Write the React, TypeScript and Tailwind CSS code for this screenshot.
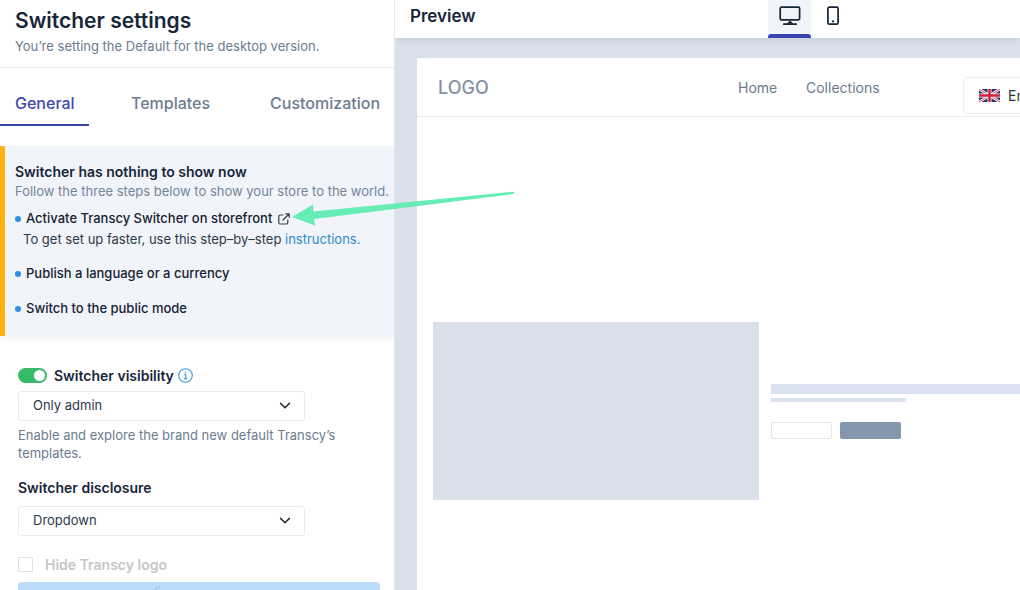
import React from "react";

function DesktopIcon() {
  return (
    <svg width="22" height="20" viewBox="0 0 22 20" fill="none" stroke="#152536" strokeWidth="1.7" aria-hidden="true">
      <rect x="1.2" y="1.2" width="19.4" height="12.6" rx="1.2" />
      <path d="M4.8 18.2h12.4" strokeLinecap="round" />
      <path d="M11 14.4l3.4 3.4H7.6z" fill="#152536" stroke="none" />
    </svg>
  );
}

function PhoneIcon() {
  return (
    <svg width="12" height="20" viewBox="0 0 12 20" fill="none" stroke="#152536" strokeWidth="1.7" aria-hidden="true">
      <rect x="0.9" y="1.2" width="10.2" height="17" rx="1.4" />
      <circle cx="6" cy="15.4" r="1.1" fill="#152536" stroke="none" />
    </svg>
  );
}

function ExternalIcon() {
  return (
    <svg width="12" height="12" viewBox="0 0 12 12" fill="none" stroke="#34404d" strokeWidth="1.2" strokeLinecap="round" strokeLinejoin="round" aria-hidden="true">
      <path d="M5 2H2.2A1.4 1.4 0 0 0 .8 3.4v6.2A1.4 1.4 0 0 0 2.2 11h6.2a1.4 1.4 0 0 0 1.4-1.4V7" />
      <path d="M7.6.8h3.6v3.6M11 1L5 7" />
    </svg>
  );
}

function InfoIcon() {
  return (
    <svg width="15" height="15" viewBox="0 0 15 15" fill="none" stroke="#3f97dc" strokeWidth="1.1" aria-hidden="true">
      <circle cx="7.5" cy="7.5" r="6.8" />
      <path d="M6.3 6.6h1.4v4M6 10.6h3.2" />
      <circle cx="7.4" cy="4.5" r="0.8" fill="#3f97dc" stroke="none" />
    </svg>
  );
}

function UkFlag() {
  return (
    <svg width="21" height="13" viewBox="0 0 21 13" aria-hidden="true">
      <rect width="21" height="13" fill="#29306b" />
      <path d="M0 0l21 13M21 0L0 13" stroke="#fff" strokeWidth="2.6" />
      <path d="M0 0l21 13M21 0L0 13" stroke="#cf1f3d" strokeWidth="0.8" />
      <path d="M10.5 0v13M0 6.5h21" stroke="#fff" strokeWidth="4" />
      <path d="M10.5 0v13M0 6.5h21" stroke="#cf1f3d" strokeWidth="2.4" />
    </svg>
  );
}

function PointerArrow() {
  return (
    <svg className="pointer-events-none absolute left-[290px] top-[188px] z-10" width="226" height="40" viewBox="0 0 226 40" aria-hidden="true">
      <path d="M2 29L23 16.5L23.5 23.5L223 3.8Q226 4.6 223 6L24 31L25 37.5Z" fill="#66ecb4" />
    </svg>
  );
}

function SelectBox({ id, label, options }: { id: string; label: string; options: string[] }) {
  return (
    <div className="relative w-[287px]">
      <select
        id={id}
        aria-label={label}
        className="block h-[30px] w-full appearance-none rounded-[3px] border border-[#e8eaed] bg-white pl-[14px] pr-8 text-[13px] text-[#2b3a4a]"
      >
        {options.map((o) => (
          <option key={o}>{o}</option>
        ))}
      </select>
      <svg className="pointer-events-none absolute right-[14px] top-[11px]" width="12" height="8" viewBox="0 0 12 8" fill="none" stroke="#27323d" strokeWidth="1.6" strokeLinecap="round" strokeLinejoin="round" aria-hidden="true">
        <path d="M1.6 1.4L6 5.8l4.4-4.4" />
      </svg>
    </div>
  );
}

function Step({ children }: { children: React.ReactNode }) {
  return (
    <div className="flex h-5 items-center text-[13px] font-medium text-[#152232]">
      <span className="mr-[5px] size-[6px] rounded-full bg-[#2f8fe0]" />
      {children}
    </div>
  );
}

function SettingsPanel() {
  return (
    <aside className="w-[395px] shrink-0 border-r border-[#e6eaf0] bg-white">
      <header className="h-[68px] border-b border-[#e6eaef] pl-[15px] pt-2">
        <h1 className="text-[21px] font-semibold leading-[26px] text-[#17263a]">Switcher settings</h1>
        <p className="pt-[3px] text-[13px] leading-[18px] text-[#6b7b8f]">You’re setting the Default for the desktop version.</p>
      </header>

      <nav className="flex h-[58px] text-[16px] font-medium text-[#6d7c90]">
        <button className="mt-[14px] w-[89px] border-b-2 border-[#3a45b0] pl-[15px] text-left text-[#3f48b0]">General</button>
        <button className="ml-[42px] mt-[14px] border-b-2 border-transparent">Templates</button>
        <button className="ml-auto mr-[14px] mt-[14px] border-b-2 border-transparent">Customization</button>
      </nav>

      <section className="mt-5 h-[190px] border-l-[5px] border-[#ffb310] bg-[#f1f4fa] pl-[10px] pt-4 shadow-[0_3px_6px_rgba(0,0,0,0.05)]">
        <h2 className="text-[14px] font-semibold leading-5 text-[#17263a]">Switcher has nothing to show now</h2>
        <p className="mb-[9px] whitespace-nowrap text-[13px] leading-[18px] text-[#75859a]">Follow the three steps below to show your store to the world.</p>
        <Step>
          <a href="#activate" className="flex items-center gap-[6px]">
            Activate Transcy Switcher on storefront
            <ExternalIcon />
          </a>
        </Step>
        <p className="mb-[15px] pl-2 text-[13px] leading-5 text-[#2c3948]">
          To get set up faster, use this step–by–step{" "}
          <a href="#instructions" className="text-[#2f8bd0]">instructions.</a>
        </p>
        <Step>Publish a language or a currency</Step>
        <div className="mt-[15px]">
          <Step>Switch to the public mode</Step>
        </div>
      </section>

      <form className="pl-[18px] pr-[14px] pt-7">
        <div className="mb-[5px] flex h-[22px] items-center">
          <input
            id="visibility"
            type="checkbox"
            role="switch"
            defaultChecked
            className="mr-[7px] flex h-[15px] w-[29px] appearance-none items-center justify-end rounded-full bg-[#36bb6a] px-[2px] before:size-[11px] before:rounded-full before:bg-white"
          />
          <label htmlFor="visibility" className="mr-1 text-[14px] font-semibold text-[#17263a]">Switcher visibility</label>
          <InfoIcon />
        </div>
        <SelectBox id="audience" label="Audience" options={["Only admin", "Public"]} />
        <p className="mb-4 mt-[5px] max-w-[330px] text-[13px] leading-[18px] text-[#6b7b8f]">
          Enable and explore the brand new default Transcy’s templates.
        </p>
        <label htmlFor="disclosure" className="mb-2 block text-[14px] font-semibold leading-5 text-[#17263a]">Switcher disclosure</label>
        <SelectBox id="disclosure" label="Switcher disclosure" options={["Dropdown", "Modal"]} />
        <div className="mb-2 mt-[18px] flex h-5 items-center gap-3">
          <input id="hide-logo" type="checkbox" disabled className="size-[15px] appearance-none border border-[#e0e2e4] bg-white" />
          <label htmlFor="hide-logo" className="text-[14px] font-semibold text-[#c4c6c9]">Hide Transcy logo</label>
        </div>
        <button type="button" aria-label="Upgrade" className="h-10 w-full rounded-[4px] bg-[#bbdcfa] pl-[135px]">
          <svg className="mb-6" width="8" height="10" viewBox="0 0 8 10" fill="none" stroke="#93c0e8" strokeWidth="1" aria-hidden="true">
            <path d="M7 1L5.8 3.4M4.4 1.8L1 8" />
          </svg>
        </button>
      </form>
    </aside>
  );
}

function Preview() {
  return (
    <main className="flex min-w-0 flex-1 flex-col overflow-hidden bg-[#dae1ea]">
      <header className="flex h-[38px] shrink-0 items-stretch bg-white pl-[15px] shadow-[0_2px_6px_rgba(40,55,80,0.12)]">
        <h2 className="w-[358px] shrink-0 pt-1 text-[17px] font-semibold leading-6 text-[#17263a]">Preview</h2>
        <button aria-label="Desktop" className="flex w-[43px] flex-col items-center justify-between bg-[#f1f4fa] pt-[6px]">
          <DesktopIcon />
          <span className="h-1 w-full rounded-t-[3px] bg-[#3a45b5]" />
        </button>
        <button aria-label="Mobile" className="flex w-[43px] justify-center pt-[6px]">
          <PhoneIcon />
        </button>
      </header>

      <div className="ml-[22px] mt-5 flex-1 overflow-hidden bg-white">
        <div className="flex h-[59px] items-center border-b border-[#e9ebee] pl-[21px] text-[14px] text-[#6c7a8c]">
          <span className="w-[300px] shrink-0 text-[18px] font-medium text-[#8591a3]">LOGO</span>
          <a href="#home" className="w-[68px] shrink-0">Home</a>
          <a href="#collections" className="w-[157px] shrink-0">Collections</a>
          <button className="mt-4 flex h-[37px] w-[140px] shrink-0 items-center gap-2 rounded-[4px] border border-[#eceef1] bg-white pl-[15px] text-[14px] text-[#27323f]">
            <UkFlag />
            English
          </button>
        </div>
        <div className="flex items-center gap-3 pl-4 pt-[205px]">
          <div className="h-[178px] w-[326px] shrink-0 bg-[#dae1ea]" />
          <div className="flex-1">
            <div className="h-[10px] bg-[#dbe3f2]" />
            <div className="mt-1 h-1 w-[135px] bg-[#dde3ee]" />
            <div className="mt-5 flex gap-2">
              <div className="h-[17px] w-[61px] shrink-0 rounded-[2px] border border-[#e4e6e9]" />
              <div className="h-[17px] w-[61px] shrink-0 rounded-[2px] bg-[#8597ae]" />
            </div>
          </div>
        </div>
      </div>
    </main>
  );
}

export default function App() {
  return (
    <div className="relative flex h-screen overflow-hidden bg-white font-['Inter',sans-serif]">
      <SettingsPanel />
      <Preview />
      <PointerArrow />
    </div>
  );
}
